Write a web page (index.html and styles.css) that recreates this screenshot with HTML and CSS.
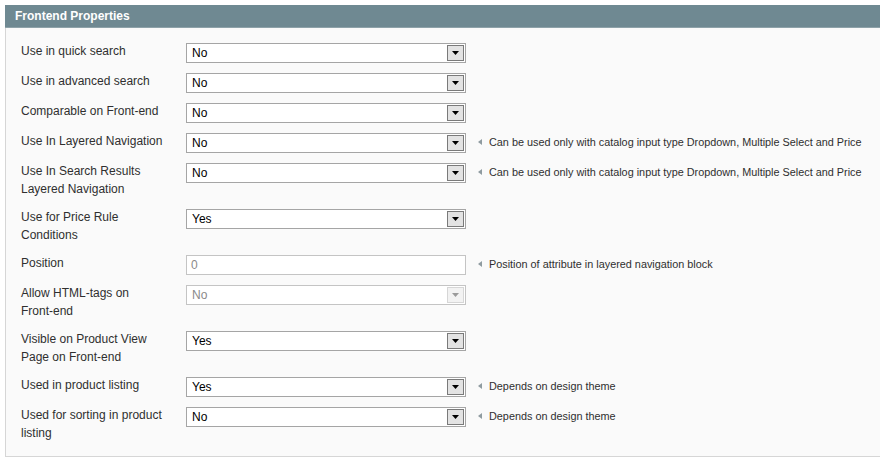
FILE: index.html
```html
<!DOCTYPE html>
<html>
<head>
<meta charset="utf-8">
<link rel="stylesheet" href="styles.css">
</head>
<body>
<div class="box">
  <div class="head">Frontend Properties</div>
  <div class="fieldset">
    <div class="row"><div class="label">Use in quick search</div><div class="select"><span class="val">No</span><span class="btn"><svg width="7" height="4" viewBox="0 0 7 4"><path d="M0 0H7L3.5 4Z"/></svg></span></div></div>
    <div class="row"><div class="label">Use in advanced search</div><div class="select"><span class="val">No</span><span class="btn"><svg width="7" height="4" viewBox="0 0 7 4"><path d="M0 0H7L3.5 4Z"/></svg></span></div></div>
    <div class="row"><div class="label">Comparable on Front-end</div><div class="select"><span class="val">No</span><span class="btn"><svg width="7" height="4" viewBox="0 0 7 4"><path d="M0 0H7L3.5 4Z"/></svg></span></div></div>
    <div class="row"><div class="label">Use In Layered Navigation</div><div class="select"><span class="val">No</span><span class="btn"><svg width="7" height="4" viewBox="0 0 7 4"><path d="M0 0H7L3.5 4Z"/></svg></span></div><div class="note">Can be used only with catalog input type Dropdown, Multiple Select and Price</div></div>
    <div class="row"><div class="label">Use In Search Results Layered Navigation</div><div class="select"><span class="val">No</span><span class="btn"><svg width="7" height="4" viewBox="0 0 7 4"><path d="M0 0H7L3.5 4Z"/></svg></span></div><div class="note">Can be used only with catalog input type Dropdown, Multiple Select and Price</div></div>
    <div class="row"><div class="label">Use for Price Rule Conditions</div><div class="select"><span class="val">Yes</span><span class="btn"><svg width="7" height="4" viewBox="0 0 7 4"><path d="M0 0H7L3.5 4Z"/></svg></span></div></div>
    <div class="row"><div class="label">Position</div><div class="input disabled">0</div><div class="note">Position of attribute in layered navigation block</div></div>
    <div class="row"><div class="label">Allow HTML-tags on Front&#8209;end</div><div class="select disabled"><span class="val">No</span><span class="btn"><svg width="7" height="4" viewBox="0 0 7 4"><path d="M0 0H7L3.5 4Z"/></svg></span></div></div>
    <div class="row"><div class="label">Visible on Product View Page on Front-end</div><div class="select"><span class="val">Yes</span><span class="btn"><svg width="7" height="4" viewBox="0 0 7 4"><path d="M0 0H7L3.5 4Z"/></svg></span></div></div>
    <div class="row"><div class="label">Used in product listing</div><div class="select"><span class="val">Yes</span><span class="btn"><svg width="7" height="4" viewBox="0 0 7 4"><path d="M0 0H7L3.5 4Z"/></svg></span></div><div class="note">Depends on design theme</div></div>
    <div class="row"><div class="label">Used for sorting in product listing</div><div class="select"><span class="val">No</span><span class="btn"><svg width="7" height="4" viewBox="0 0 7 4"><path d="M0 0H7L3.5 4Z"/></svg></span></div><div class="note">Depends on design theme</div></div>
  </div>
</div>
</body>
</html>
```

FILE: styles.css
```css
html, body { margin: 0; padding: 0; background: #ffffff; overflow: hidden; }
body { padding: 5px 0 0 5px; font-family: "Liberation Sans", Arial, sans-serif; font-size: 12px; color: #2f2f2f; }
.box { width: 900px; }
.head {
  background: #6f8992;
  color: #ffffff;
  font-weight: bold;
  font-size: 12px;
  height: 22px;
  line-height: 22px;
  padding-left: 10px;
  border-bottom: 1px solid #8ea2a9;
}
.fieldset {
  background: #fafafa;
  border: 1px solid #d6d6d6;
  border-top: 0;
  padding: 13px 15px 5px;
}
.row { display: flex; align-items: flex-start; padding-bottom: 8px; }
.label {
  box-sizing: border-box;
  width: 165px;
  padding: 1px 15px 1px 0;
  line-height: 18px;
  flex: none;
}
.select, .input {
  flex: none;
  box-sizing: border-box;
  width: 280px;
  height: 20px;
  margin-top: 2px;
  border: 1px solid #a5a5a5;
  background: #ffffff;
  display: flex;
  align-items: center;
  color: #000;
}
.val { flex: 1; padding-left: 5px; line-height: 18px; }
.input { padding-left: 4px; line-height: 18px; }
.btn {
  box-sizing: border-box;
  width: 17px;
  height: 16px;
  margin-right: 1px;
  border: 1px solid #7a7a7a;
  background: #e3e3e3;
  display: flex;
  align-items: center;
  justify-content: center;
}
.btn svg { fill: #000; display: block; }
.disabled { border-color: #c4c4c4; color: #8a8a8a; }
.disabled .btn { border-color: #d6d6d6; background: #f2f2f2; }
.disabled .btn svg { fill: #9a9a9a; }
.note {
  position: relative;
  margin: 4px 0 0 12px;
  padding-left: 11px;
  font-size: 10.85px;
  line-height: 14px;
  color: #2f2f2f;
  white-space: nowrap;
}
.note::before {
  content: "";
  position: absolute;
  left: 0;
  top: 4px;
  border-style: solid;
  border-width: 3px 4px 3px 0;
  border-color: transparent #8f9ba0 transparent transparent;
}
```
